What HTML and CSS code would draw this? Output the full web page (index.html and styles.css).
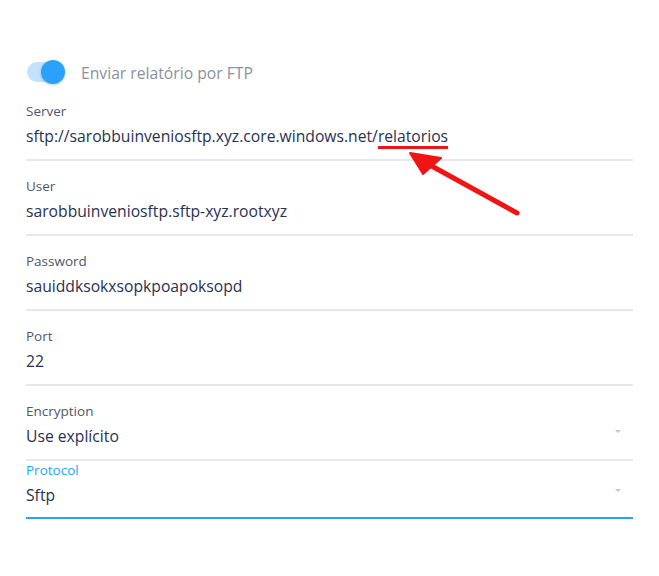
FILE: index.html
```html
<!DOCTYPE html>
<html lang="pt">
<head>
<meta charset="utf-8">
<title>FTP</title>
<link rel="stylesheet" href="styles.css">
</head>
<body>
<div class="page">
  <div class="switch-row">
    <span class="switch"><span class="track"></span><span class="thumb"></span></span>
    <span class="switch-label">Enviar relatório por FTP</span>
  </div>
  <div class="field">
    <div class="label">Server</div>
    <div class="value">sftp://sarobbuinveniosftp.xyz.core.windows.net/<span class="mark">relatorios</span></div>
  </div>
  <div class="field">
    <div class="label">User</div>
    <div class="value">sarobbuinveniosftp.sftp-xyz.rootxyz</div>
  </div>
  <div class="field">
    <div class="label">Password</div>
    <div class="value">sauiddksokxsopkpoapoksopd</div>
  </div>
  <div class="field">
    <div class="label">Port</div>
    <div class="value">22</div>
  </div>
  <div class="field select">
    <div class="label">Encryption</div>
    <div class="value"><span>Use explícito</span><span class="caret"></span></div>
  </div>
  <div class="field select focused">
    <div class="label">Protocol</div>
    <div class="value"><span>Sftp</span><span class="caret"></span></div>
  </div>
  <svg class="arrow" width="659" height="576" viewBox="0 0 659 576">
    <line x1="517" y1="213" x2="428" y2="164" stroke="#f01414" stroke-width="5" stroke-linecap="round"/>
    <polygon points="410,153 441,158 423,174" fill="#f01414" stroke="#f01414" stroke-width="2" stroke-linejoin="round"/>
  </svg>
</div>
</body>
</html>
```
FILE: styles.css
```css
html, body {
  margin: 0;
  padding: 0;
  background: #ffffff;
}
body {
  font-family: "Open Sans", "Noto Sans", sans-serif;
}
.page {
  position: relative;
  width: 659px;
  height: 576px;
  box-sizing: border-box;
  padding: 58px 26px 0 26px;
}
.switch-row {
  display: flex;
  align-items: center;
  height: 28px;
}
.switch {
  position: relative;
  width: 38px;
  height: 28px;
  margin-left: 1px;
}
.track {
  position: absolute;
  left: 0;
  top: 4px;
  width: 37px;
  height: 20px;
  border-radius: 10px;
  background: #c3e2fd;
}
.thumb {
  position: absolute;
  left: 14px;
  top: 2px;
  width: 24px;
  height: 24px;
  border-radius: 50%;
  background: #2aa2fb;
  box-shadow: 0 1px 3px rgba(0, 0, 0, 0.22);
}
.switch-label {
  margin-left: 16px;
  margin-top: 2px;
  font-size: 15.7px;
  color: #8a90a0;
}
.field {
  padding: 16px 0 11px 0;
  border-bottom: 2px solid #e7e7ef;
}
.label {
  font-size: 13.5px;
  line-height: 18px;
  color: #4f566b;
}
.value {
  margin-top: 4px;
  font-size: 15.7px;
  line-height: 24px;
  color: #283150;
}
.select .value {
  display: flex;
  align-items: center;
  justify-content: space-between;
}
.value .mark {
  text-decoration: underline;
  text-decoration-color: #f01414;
  text-decoration-thickness: 3px;
  text-underline-offset: 4px;
}
.caret {
  width: 0;
  height: 0;
  border-left: 3px solid transparent;
  border-right: 3px solid transparent;
  border-top: 3px solid #c2c6ce;
  margin-right: 12px;
  margin-bottom: 9px;
}
.field.focused {
  padding-top: 0;
  padding-bottom: 10px;
  border-bottom-color: #2aa2fb;
}
.field.focused .label {
  color: #2aa2fb;
}
.arrow {
  position: absolute;
  left: 0;
  top: 0;
  pointer-events: none;
}
```
